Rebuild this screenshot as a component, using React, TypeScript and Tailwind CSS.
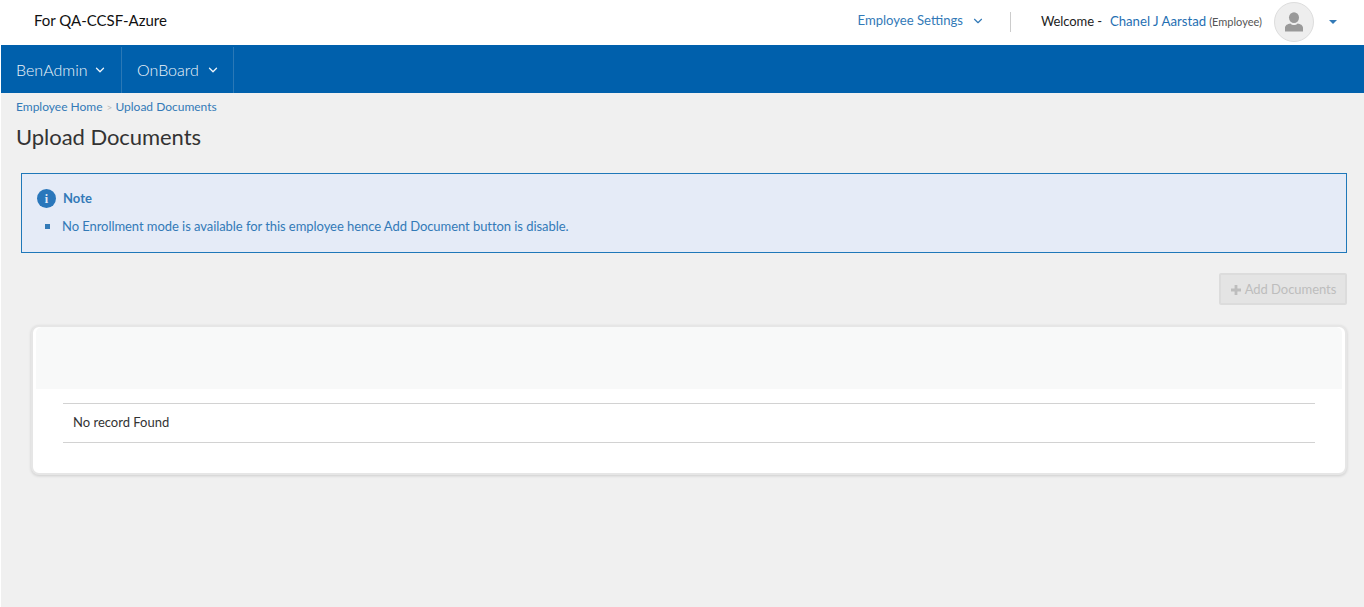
import React from 'react';
import { ChevronDown } from 'lucide-react';

const App: React.FC = () => {
    return (
        <div className="min-h-[607px] bg-white pl-px font-['Lato',sans-serif] text-[13px] text-[#333]">
            {/* Top header */}
            <div className="-ml-px flex h-[45px] items-center bg-white pb-px pl-[34px] pr-[27px]">
                <span className="pb-[3px] text-[15px] text-[#111]">For QA-CCSF-Azure</span>
                <div className="ml-auto flex items-center">
                    <div className="flex items-center pb-[2px] text-[#337ab7]">
                        <span className="text-[13.1px]">Employee Settings</span>
                        <ChevronDown className="ml-[8px] h-[14px] w-[14px]" strokeWidth={2} />
                    </div>
                    <div className="ml-[25px] mr-[30px] h-5 w-px bg-[#ccc]"></div>
                    <span className="text-[13px] tracking-[-0.1px] text-[#222]">Welcome -</span>
                    <span className="ml-2 text-[13.2px] text-[#1f6fb2]">Chanel J Aarstad</span>
                    <span className="ml-[3px] text-[11px] text-[#555]">(Employee)</span>
                    <div className="ml-3 flex h-10 w-10 items-center justify-center overflow-hidden rounded-full border border-[#ddd] bg-[#eee]">
                        <svg viewBox="0 0 20 20" className="h-5 w-5 text-[#999]" fill="currentColor">
                            <ellipse cx="10" cy="5.6" rx="5" ry="5.4" />
                            <path d="M1 19.5v-3.7c0-2.6 2.6-4 5.4-4.4 1 1 2.2 1.5 3.6 1.5s2.6-.5 3.6-1.5c2.8.4 5.4 1.8 5.4 4.4v3.7z" />
                        </svg>
                    </div>
                    <div className="ml-[15px] h-0 w-0 border-x-4 border-t-4 border-x-transparent border-t-[#337ab7]"></div>
                </div>
            </div>

            {/* Nav bar */}
            <div className="flex h-[48px] items-stretch bg-[#0060ac] pt-0.5 text-[16px] font-light text-[#eef4fa]">
                <div className="flex w-[121px] items-center border-r border-[#2a78b6] pl-[15px]">
                    BenAdmin
                    <ChevronDown className="ml-[5px] h-[14px] w-[14px]" strokeWidth={2.25} />
                </div>
                <div className="flex w-[112px] items-center border-r border-[#2a78b6] pl-[15px]">
                    OnBoard
                    <ChevronDown className="ml-[7px] h-[14px] w-[14px]" strokeWidth={2.25} />
                </div>
            </div>

            {/* Page body */}
            <div className="h-[514px] bg-[#f0f0f0]">
                <div className="flex items-center pl-[15px] pt-[6px] text-[12px] leading-[16px] text-[#337ab7]">
                    <span>Employee Home</span>
                    <span className="ml-[4px] mr-[3px] text-[10px] text-[#bbb]">&gt;</span>
                    <span>Upload Documents</span>
                </div>
                <h1 className="mt-[8px] pl-[15px] text-[22px] font-normal leading-[28px] tracking-[-0.05px] text-[#333]">Upload Documents</h1>

                {/* Note */}
                <div className="ml-5 mr-[17px] mt-[22px] h-20 border border-[#1f78b9] bg-[#e5ebf7] pl-[15px] pt-[15px] text-[#337ab7]">
                    <div className="flex items-center">
                        <div className="flex h-[19px] w-[19px] items-center justify-center rounded-full bg-[#2a77bb] font-['Liberation_Serif',serif] text-[12px] font-bold text-[#e5ebf7]">i</div>
                        <span className="ml-[7px] text-[13px] font-bold leading-[19px]">Note</span>
                    </div>
                    <div className="mt-[9px] flex items-center pl-2">
                        <div className="h-[5px] w-[5px] bg-[#337ab7]"></div>
                        <span className="ml-3 text-[13px] leading-[18px] tracking-[-0.06px]">No Enrollment mode is available for this employee hence Add Document button is disable.</span>
                    </div>
                </div>

                {/* Actions */}
                <div className="mr-[17px] mt-5 flex justify-end">
                    <div className="flex h-8 w-[128px] items-center justify-center rounded-[2px] border-2 border-[#dcdcdc] bg-[#e4e4e4] pl-px pt-px text-[13px] tracking-[-0.05px] text-[#bdbdbd]">
                        <svg viewBox="0 0 10 10" className="mr-[4px] h-[10px] w-[10px]" fill="currentColor">
                            <path d="M3.6 0h2.8v3.6H10v2.8H6.4V10H3.6V6.4H0V3.6h3.6z" />
                        </svg>
                        <span>Add Documents</span>
                    </div>
                </div>

                {/* Table card */}
                <div className="ml-[30px] mr-[17px] mt-5 h-[150px] rounded-[8px] border-2 border-[#e6e6e6] bg-white px-[3px] shadow-[0_1px_3px_rgba(0,0,0,0.15)]">
                    <div className="h-[62px] rounded-t-[6px] bg-[#f8f9f9]"></div>
                    <div className="ml-[27px] mr-[27px] mt-[14px] flex h-10 items-center border-y border-[#d2d2d2] pl-[10px] text-[13px] text-[#333]">
                        No record Found
                    </div>
                </div>
            </div>
        </div>
    );
};

export default App;
